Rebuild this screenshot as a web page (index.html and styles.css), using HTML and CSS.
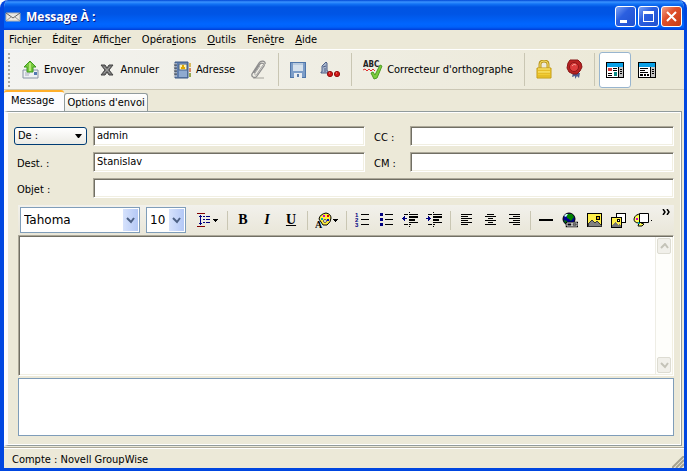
FILE: index.html
```html
<!DOCTYPE html>
<html lang="fr">
<head>
    <meta charset="UTF-8">
    <meta name="viewport" content="width=device-width, initial-scale=1.0">
    <title>Message À :</title>
    <link rel="stylesheet" href="styles.css">
</head>
<body>
<div class="window">

    <!-- Title bar -->
    <header class="titlebar">
        <svg width="16" height="16" viewBox="0 0 16 16"><path d="M1 4h14v8H1z" fill="#e8e8e4" stroke="#b5b5b0"/><path d="M1 4l7 5 7-5" fill="none" stroke="#666"/><path d="M1 12l5-4M15 12l-5-4" stroke="#999"/></svg>
        <h1>Message À :</h1>
        <button class="win-btn" aria-label="Réduire"><svg width="19" height="19"><path d="M4 13h7v3H4z" fill="#fff"/></svg></button>
        <button class="win-btn" aria-label="Agrandir"><svg width="19" height="19"><path d="M4 4h11v11H4zM5 7v7h9V7z" fill="#fff" fill-rule="evenodd"/></svg></button>
        <button class="win-btn close" aria-label="Fermer"><svg width="19" height="19"><path d="M5 5l9 9M14 5l-9 9" stroke="#fff" stroke-width="2"/></svg></button>
    </header>

    <!-- Menu -->
    <nav class="menubar">
        <button>Fich<u>i</u>er</button>
        <button>Édit<u>e</u>r</button>
        <button>Affic<u>h</u>er</button>
        <button>Opéra<u>t</u>ions</button>
        <button><u>O</u>utils</button>
        <button>Fenê<u>t</u>re</button>
        <button><u>A</u>ide</button>
    </nav>

    <!-- Main toolbar -->
    <div class="toolbar">
        <span class="grip"></span>
        <button class="tool">
            <svg width="18" height="20" viewBox="0 0 18 20"><path d="M1 10h15v8H1z" fill="#eef1f4" stroke="#8792a3"/><path d="M3 13h5M3 15h4" stroke="#aab"/><path d="M12 12h3v3h-3z" fill="#5379b0"/><path d="M8 1l6 6h-3v5H5V7H2z" fill="#76c83a" stroke="#3f9a20"/><path d="M8 3v8" stroke="#b2e878" stroke-width="2"/></svg>
            Envoyer
        </button>
        <button class="tool">
            <svg width="18" height="14" viewBox="0 0 18 14"><path d="M3 2h4l2 3 2-3h4l-4 5 4 5h-4l-2-3-2 3H3l4-5z" fill="#777" stroke="#444"/><path d="M6 4l6 6M12 4l-6 6" stroke="#999"/></svg>
            Annuler
        </button>
        <button class="tool">
            <svg width="19" height="20" viewBox="0 0 19 20"><path d="M2 2h13v16H2z" fill="#5f7eae" stroke="#3e5a86"/><path d="M6 3h8v14H6z" fill="#8faad0"/><path d="M6 4h8v6H6z" fill="#fff3b0" stroke="#46618d"/><path d="M9 5h2v2H9zM8 7h4v2H8z" fill="#e0a800"/><path d="M16 3h2v4h-2z" fill="#d9bb60"/><path d="M16 8h2v4h-2z" fill="#d88962"/><path d="M16 13h2v4h-2z" fill="#94a850"/><path d="M0 4h4M0 7h4M0 10h4M0 13h4M0 16h4" stroke="#ddd"/><path d="M1 5h3M1 8h3M1 11h3M1 14h3" stroke="#555"/></svg>
            Adresse
        </button>
        <button class="tool" aria-label="Joindre">
            <svg width="18" height="21" viewBox="0 0 18 21"><path d="M4 19h11" stroke="#c9c8c0" stroke-width="2"/><path d="M5 14l6-9c2-2 5 0 4 2l-7 10c-2 3-6 1-5-2L10 4c2-3 7-2 6 1" fill="none" stroke="#8e8e8e" stroke-width="1.3"/><path d="M11 7l-5 7c-1 2 1 3 2 1l6-9" fill="none" stroke="#a6a6a6"/></svg>
        </button>
        <span class="sep"></span>
        <button class="tool" aria-label="Enregistrer">
            <svg width="16" height="16" viewBox="0 0 16 16"><path d="M0 0h16v16H0z" fill="#4f77aa"/><path d="M1 1h14v14H1z" fill="#7c9dc8"/><path d="M3 1h10v8H3z" fill="#d5e1ec"/><path d="M3 1h10v2H3z" fill="#b8cbdf"/><path d="M4 11h8v5H4z" fill="#e9edf1"/><path d="M7 12h2v3H7z" fill="#5a7ca8"/></svg>
        </button>
        <button class="tool" aria-label="Propriétés">
            <svg width="20" height="20" viewBox="0 0 20 20"><path d="M2 12V6l4-4 1 1v8h1v2H1v-1z" fill="#a9b6cc" stroke="#4e6188"/><path d="M3 7l3-1M4 9h2M4 11h2" stroke="#4e6188"/><circle cx="10" cy="14" r="2.600" fill="#d41717" stroke="#8e1010"/><circle cx="17" cy="14" r="2.600" fill="#d41717" stroke="#8e1010"/><path d="M9 13h1M16 13h1" stroke="#ff9a8a"/></svg>
        </button>
        <span class="sep"></span>
        <button class="tool spell">
            <svg width="20" height="20" viewBox="0 0 20 20"><text x="0" y="7" class="abc">ABC</text><path d="M0 10l2-1 2 2 2-2 2 2 2-2 2 2" fill="none" stroke="#e03030"/><path d="M8 13l2-1 2 3 5-10 2 1-5 12-3 1z" fill="#7ccc3c" stroke="#4d9d24"/></svg>
            Correcteur d'orthographe
        </button>
        <span class="sep"></span>
        <button class="tool" aria-label="Chiffrer">
            <svg width="16" height="19" viewBox="0 0 16 19"><path d="M4 9V4q0-3 4-3t4 3v5" fill="none" stroke="#b9951e" stroke-width="3"/><path d="M4 9V4q0-3 4-3t4 3v5" fill="none" stroke="#f6df66"/><path d="M1 8h14v10H1z" fill="#f2cd35" stroke="#c39a13"/><path d="M2 10h12M2 13h12M2 16h12" stroke="#d9ae1c"/><path d="M2 9h12M2 12h12" stroke="#fdea80"/></svg>
        </button>
        <button class="tool" aria-label="Signer">
            <svg width="17" height="21" viewBox="0 0 17 21"><path d="M7 14h7l-1 5-2-2-2 3v-3l-3 1z" fill="#4c5d91"/><path d="M4 1h8l3 3 1 4-2 4-3 3H7l-4-2-2-4 1-5z" fill="#b82222" stroke="#861515"/><circle cx="8" cy="8" r="4.500" fill="#dc3c3c" stroke="#8b1818"/><path d="M6 7q2-3 4-1" fill="none" stroke="#f69a92"/></svg>
        </button>
        <span class="sep"></span>
        <button class="tool view pressed" aria-label="Vue HTML" aria-pressed="true">
            <svg width="18" height="16" viewBox="0 0 18 16" shape-rendering="crispEdges"><path d="M0 0h18v16H0z"/><path d="M1 1h16v4H1z" fill="#0aa0e6"/><path d="M1 5h11v10H1z" fill="#fff"/><path d="M13 5h4v10h-4z" fill="#c4c4c4"/><path d="M2 6h4v3H2z" fill="#d33c3c"/><path d="M8 10h3v4H8z" fill="#0b8c86"/><path d="M7 6h4v1H7zM7 8h4v1H7zM2 11h4v1H2zM2 13h4v1H2zM14 7h2v1h-2zM14 9h2v1h-2zM14 11h2v1h-2z"/></svg>
        </button>
        <button class="tool view" aria-label="Vue texte" aria-pressed="false">
            <svg width="18" height="16" viewBox="0 0 18 16" shape-rendering="crispEdges"><path d="M0 0h18v16H0z"/><path d="M1 1h16v4H1z" fill="#0aa0e6"/><path d="M1 5h11v10H1z" fill="#fff"/><path d="M13 5h4v10h-4z" fill="#c4c4c4"/><path d="M2 6h8v1H2zM2 8h5v1H2zM2 10h8v1H2zM2 12h3v2H2zM6 12h2v2H6zM9 12h2v2H9zM14 7h2v1h-2zM14 9h2v1h-2zM14 11h2v1h-2z"/></svg>
        </button>
    </div>

    <!-- Tabs -->
    <div class="tabs" role="tablist">
        <button class="tab active" role="tab" aria-selected="true">Message</button>
        <button class="tab" role="tab" aria-selected="false">Options d'envoi</button>
    </div>

    <main class="panel">
        <div class="fields">
            <button class="from-btn">De :
                <svg width="9" height="5"><path d="M1 0h7L5 4H4z"/></svg>
            </button>
            <input type="text" value="admin" aria-label="De">
            <label class="copy" for="cc">CC :</label>
            <input type="text" id="cc">

            <label for="dest">Dest. :</label>
            <input type="text" id="dest" value="Stanislav">
            <label class="copy" for="cm">CM :</label>
            <input type="text" id="cm">

            <label for="objet">Objet :</label>
            <input type="text" id="objet" class="wide">
        </div>

        <!-- Formatting toolbar -->
        <div class="format-bar">
            <span class="combo font">
                <select aria-label="Police"><option>Tahoma</option></select>
                <span class="combo-arrow"><svg width="9" height="7"><path d="M1 1l4 4 3-4" fill="none" stroke="#4d6185" stroke-width="2"/></svg></span>
            </span>
            <span class="combo size">
                <select aria-label="Taille"><option>10</option></select>
                <span class="combo-arrow"><svg width="9" height="7"><path d="M1 1l4 4 3-4" fill="none" stroke="#4d6185" stroke-width="2"/></svg></span>
            </span>
            <button class="fmt drop" aria-label="Style de paragraphe">
                <svg width="22" height="15" viewBox="0 0 22 15" shape-rendering="crispEdges"><path d="M0 0h8v1H0zM0 13h8v1H0z" fill="#800000"/><path d="M3 2h1v10H3zM2 3h3v1H2zM2 10h3v1H2zM6 3h2v1H6zM6 6h2v1H6zM6 9h2v1H6zM9 3h4v1H9zM9 6h4v1H9zM9 9h4v1H9z" fill="#000080"/><path d="M16 6h5v1h-5zM17 7h3v1h-3zM18 8h1v1h-1z"/></svg>
            </button>
            <span class="sep"></span>
            <button class="fmt letter"><b>B</b></button>
            <button class="fmt letter"><i>I</i></button>
            <button class="fmt letter"><u>U</u></button>
            <span class="sep"></span>
            <button class="fmt drop" aria-label="Couleur du texte">
                <svg width="24" height="17" viewBox="0 0 24 17"><path d="M4 7q1-5 7-6 5 1 5 5t-4 7H8z" fill="#ffef3a" stroke="#000"/><path d="M6 6h2v2H6z" fill="#0aa"/><path d="M8 3h2v2H8z" fill="#c0c"/><path d="M12 3h2v2h-2z" fill="#d00"/><path d="M12 7h2v2h-2z" fill="#00c"/><circle cx="10" cy="9" r="1.500" fill="#fff" stroke="#555"/><text x="0" y="16" class="color-a">A</text><path d="M18 7h5v1h-5zM19 8h3v1h-3zM20 9h1v1h-1z"/></svg>
            </button>
            <span class="sep"></span>
            <button class="fmt" aria-label="Liste numérotée">
                <svg width="15" height="16" viewBox="0 0 15 16" shape-rendering="crispEdges"><text x="0" y="5" class="num">1</text><text x="0" y="10" class="num">2</text><text x="0" y="15" class="num">3</text><path d="M6 2h8v1H6zM6 7h8v1H6zM6 12h8v1H6z"/></svg>
            </button>
            <button class="fmt" aria-label="Liste à puces">
                <svg width="15" height="16" viewBox="0 0 15 16" shape-rendering="crispEdges"><path d="M1 1h3v3H1zM1 6h3v3H1zM1 11h3v3H1z" fill="#000080"/><path d="M6 2h8v1H6zM6 7h8v1H6zM6 12h8v1H6z"/></svg>
            </button>
            <button class="fmt" aria-label="Diminuer le retrait">
                <svg width="16" height="16" viewBox="0 0 16 16" shape-rendering="crispEdges"><path d="M0 6h5v1H0zM1 5h2v3H1zM2 4h1v5H2z" fill="#000080"/><path d="M2 2h4v1H2zM7 0h1v1H7zM7 2h9v1H7zM7 4h9v2H7zM7 7h6v2H7zM7 10h9v1H7zM2 12h4v1H2zM7 12h2v1H7zM7 14h1v1H7z"/></svg>
            </button>
            <button class="fmt" aria-label="Augmenter le retrait">
                <svg width="16" height="16" viewBox="0 0 16 16" shape-rendering="crispEdges"><path d="M0 6h5v1H0zM2 5h2v3H2zM2 4h1v5H2z" fill="#000080"/><path d="M2 2h4v1H2zM7 0h1v1H7zM7 2h9v1H7zM7 4h9v2H7zM7 7h6v2H7zM7 10h9v1H7zM2 12h4v1H2zM7 12h2v1H7zM7 14h1v1H7z"/></svg>
            </button>
            <span class="sep"></span>
            <button class="fmt" aria-label="Aligner à gauche">
                <svg width="11" height="12" viewBox="0 0 11 12" shape-rendering="crispEdges"><path d="M0 0h11v1H0zM0 2h7v1H0zM0 4h11v1H0zM0 6h7v1H0zM0 8h11v1H0zM0 10h7v1H0z"/></svg>
            </button>
            <button class="fmt" aria-label="Centrer">
                <svg width="11" height="12" viewBox="0 0 11 12" shape-rendering="crispEdges"><path d="M2 0h7v1H2zM0 2h11v1H0zM3 4h5v1H3zM0 6h11v1H0zM3 8h5v1H3zM0 10h11v1H0z"/></svg>
            </button>
            <button class="fmt" aria-label="Aligner à droite">
                <svg width="11" height="12" viewBox="0 0 11 12" shape-rendering="crispEdges"><path d="M0 0h11v1H0zM4 2h7v1H4zM0 4h11v1H0zM4 6h7v1H4zM0 8h11v1H0zM4 10h7v1H4z"/></svg>
            </button>
            <span class="sep"></span>
            <button class="fmt" aria-label="Ligne horizontale">
                <svg width="14" height="2"><path d="M0 0h14v2H0z"/></svg>
            </button>
            <button class="fmt" aria-label="Lien">
                <svg width="16" height="16" viewBox="0 0 16 16"><circle cx="7" cy="7" r="6" fill="#000090" stroke="#000"/><path d="M5 2h5l2 3-3 4-2-2-2-1zM2 8l3 1 1 3-3-1z" fill="#008000"/><path d="M2 4l2-2h2L4 5z" fill="#cff"/><path d="M5 11h5v3H5zM10 11h5v3h-5z" fill="none" stroke="#000" stroke-width="2.500"/><path d="M5 11h5v3H5zM10 11h5v3h-5z" fill="none" stroke="#ddd"/></svg>
            </button>
            <button class="fmt" aria-label="Image">
                <svg width="15" height="14" viewBox="0 0 15 14" shape-rendering="crispEdges"><path d="M0 0h15v14H0z"/><path d="M1 1h13v12H1z" fill="#fff04a"/><path d="M9 3h4v4H9z"/><path d="M10 4h2v2h-2z" fill="#d8a800"/><path d="M1 13v-2l4-4 3 3 2-2 4 4v1z" fill="#808080" stroke="#333"/></svg>
            </button>
            <button class="fmt" aria-label="Image d'arrière-plan">
                <svg width="15" height="15" viewBox="0 0 15 15" shape-rendering="crispEdges"><path d="M5 0h10v10H5z"/><path d="M6 1h8v8H6z" fill="#fff"/><path d="M0 4h11v11H0z"/><path d="M1 5h9v9H1z" fill="#fff04a"/><path d="M6 6h3v3H6z"/><path d="M7 7h1v1H7z" fill="#fff"/><path d="M1 14v-2l3-3 3 3 1-1 2 2v1z" fill="#777"/></svg>
            </button>
            <button class="fmt" aria-label="Couleur d'arrière-plan">
                <svg width="19" height="15" viewBox="0 0 19 15"><path d="M1 6q1-5 7-5v9l3 1q-1 3-6 2l1-3q-5 0-5-4z" fill="#ff5" stroke="#000"/><path d="M3 5h2v2H3z" fill="#c0c"/><path d="M5 9h2v2H5z" fill="#0aa"/><path d="M6.500 .5h9v9h-9z" fill="#fff" stroke="#000"/><path d="M18 7h1v1h-1z"/></svg>
            </button>
            <button class="more" aria-label="Plus d'outils"><svg width="9" height="6" viewBox="0 0 9 6"><path d="M1 0l2 3-2 3M5 0l2 3-2 3" fill="none" stroke="#000" stroke-width="1.500"/></svg></button>
        </div>

        <!-- Message body -->
        <div class="editor">
            <textarea aria-label="Corps du message"></textarea>
            <div class="scrollbar">
                <button aria-label="Haut"><svg width="9" height="7"><path d="M1 5l4-4 3 4" fill="none" stroke="#c4c3b8" stroke-width="2"/></svg></button>
                <button aria-label="Bas"><svg width="9" height="7"><path d="M1 1l4 4 3-4" fill="none" stroke="#c4c3b8" stroke-width="2"/></svg></button>
            </div>
        </div>
        <div class="attachments"></div>
    </main>

    <footer class="statusbar">
        <span>Compte : Novell GroupWise</span>
        <svg width="12" height="12"><path d="M0 12L12 0M4 12l8-8M8 12l4-4" stroke="#a5a290" stroke-width="2"/></svg>
    </footer>
</div>
</body>
</html>
```
FILE: styles.css
```css
* {
    margin: 0;
    padding: 0;
    box-sizing: border-box;
}

body {
    font-family: "DejaVu Sans Condensed", "DejaVu Sans", Tahoma, sans-serif;
    font-size: 11px;
    line-height: 14px;
    color: #000;
    background: #fff;
}

button, input, select, textarea {
    font: inherit;
    color: inherit;
}

button {
    background: none;
    border: none;
    white-space: nowrap;
}

svg {
    display: block;
    flex-shrink: 0;
}

.window {
    display: flex;
    flex-direction: column;
    min-height: 100vh;
    background: #ece9d8;
    border: solid #0046e0;
    border-width: 0 3px 3px 4px;
    border-radius: 8px 8px 0 0;
    overflow: hidden;
}

/* Title bar */
.titlebar {
    display: flex;
    align-items: center;
    gap: 2px;
    height: 30px;
    margin: 0 -3px 0 -4px;
    padding: 3px 5px 0 5px;
    background: linear-gradient(#0046d5 0, #3a93ff 2px, #1273f5 4px, #0054e3 7px, #0055e5 14px, #0066ff 24px, #0061fa 27px, #003dd7 30px);
}

.titlebar h1 {
    flex: 1;
    margin-left: 3px;
    font-family: "Open Sans", "Trebuchet MS", sans-serif;
    font-size: 12px;
    font-weight: bold;
    color: #fff;
    text-shadow: 1px 1px #0a1883;
}

.win-btn {
    width: 21px;
    height: 21px;
    border: 1px solid #fff;
    border-radius: 3px;
    background: linear-gradient(135deg, #7ba2f5, #2b5fe0 40%, #1f50d0);
}

.win-btn.close {
    background: linear-gradient(135deg, #f0a088, #e0502c 40%, #c63c14);
}

/* Menu */
.menubar {
    display: flex;
    height: 19px;
}

.menubar button {
    padding: 0 6px 0 5px;
}

/* Main toolbar */
.toolbar {
    display: flex;
    align-items: center;
    height: 41px;
    padding-left: 4px;
    border-top: 1px solid #fff;
    border-bottom: 1px solid #cbc7b5;
    background: linear-gradient(90deg, #f3f3f0, #ece9d8 90%);
}

.grip {
    width: 2px;
    height: 34px;
    margin-right: 5px;
    background: repeating-linear-gradient(#aaa89c 0 2px, transparent 2px 4px);
}

.tool {
    display: flex;
    align-items: center;
    justify-content: center;
    gap: 4px;
    height: 36px;
    padding: 0 7px;
}

.tool.view {
    width: 32px;
}

.sep {
    width: 1px;
    height: 33px;
    margin: 0 4px;
    background: #c9c6b3;
}

.tool.pressed {
    border: 1px solid #98b5cf;
    border-radius: 3px;
    background: #fff;
}

.abc {
    font: bold 8px "DejaVu Sans Condensed", sans-serif;
    fill: #222;
}

/* Tabs */
.tabs {
    display: flex;
    align-items: flex-end;
    height: 21px;
}

.tab {
    height: 18px;
    padding: 0 2px;
    border: 1px solid #919b9c;
    border-bottom: none;
    border-radius: 3px 3px 0 0;
    background: linear-gradient(#fff, #f0f0ea);
}

.tab.active {
    height: 21px;
    padding: 0 10px 2px 7px;
    border: none;
    border-top: 2px solid #ffb02c;
    background: #fcfcfe;
}

/* Panel */
.panel {
    flex: 1;
    display: flex;
    flex-direction: column;
    margin-right: 2px;
    padding: 14px 7px 9px 10px;
    border: 1px solid #919b9c;
    border-left: 4px solid #fcfcfe;
    box-shadow: inset 0 1px #fff, inset -1px -1px #fff;
}

.fields {
    display: grid;
    grid-template-columns: 73px 272px 33px 1fr;
    grid-auto-rows: 20px;
    align-items: center;
    column-gap: 6px;
    row-gap: 6px;
    margin-left: -4px;
}

.fields label {
    padding: 4px 0 0 3px;
}

.fields input {
    width: 100%;
    height: 20px;
    padding: 0 3px 2px;
    border: 1px solid;
    border-color: #aca899 #fff #fff #aca899;
    box-shadow: inset 1px 1px #716f64, inset -1px -1px #f1efe2;
    background: #fff;
}

.fields .wide {
    grid-column: 2 / -1;
}

.from-btn {
    display: flex;
    align-items: center;
    justify-content: space-between;
    height: 18px;
    padding: 0 3px;
    border: 1px solid #003c74;
    border-radius: 3px;
    background: linear-gradient(#fff, #ecebe5);
}

/* Formatting toolbar */
.format-bar {
    display: flex;
    align-items: center;
    height: 30px;
    margin-top: 7px;
    padding-left: 2px;
    background: linear-gradient(#f2f1ec, #e9e6d8);
}

.format-bar .sep {
    height: 19px;
    margin: 0 3px 0 4px;
}

.combo {
    position: relative;
    height: 26px;
    margin-right: 6px;
    border: 1px solid #7f9db9;
    background: #fff;
}

.combo.font {
    width: 120px;
}

.combo.size {
    width: 40px;
}

.combo select {
    appearance: none;
    width: 100%;
    height: 24px;
    padding-left: 3px;
    border: none;
    background: none;
    font-family: "DejaVu Sans", Verdana, sans-serif;
    font-size: 12px;
}

.combo-arrow {
    position: absolute;
    top: 1px;
    right: 1px;
    display: flex;
    align-items: center;
    justify-content: center;
    width: 15px;
    height: 22px;
    background: linear-gradient(90deg, #d6e2fc, #b4c8f6);
    pointer-events: none;
}

.fmt {
    display: flex;
    align-items: center;
    justify-content: center;
    width: 24px;
    height: 24px;
}

.fmt.drop {
    width: 31px;
}

.letter {
    font-family: "Liberation Serif", serif;
    font-size: 14px;
    font-weight: bold;
}

.num {
    font: bold 6px "Liberation Sans", sans-serif;
    fill: #000080;
}

.color-a {
    font: bold 10px "Liberation Serif", serif;
}

.more {
    align-self: flex-start;
    margin-left: auto;
    padding: 4px 3px 0 0;
}

/* Message body */
.editor {
    flex: 1;
    display: flex;
    min-height: 100px;
    padding: 1px;
    border: 1px solid;
    border-color: #aca899 #fff #fff #aca899;
    box-shadow: inset 1px 1px #716f64, inset -1px -1px #f1efe2;
    background: #fff;
}

.editor textarea {
    flex: 1;
    padding: 2px;
    border: none;
    outline: none;
    resize: none;
}

.scrollbar {
    display: flex;
    flex-direction: column;
    justify-content: space-between;
    width: 17px;
    padding: 1px;
    border-left: 1px solid #eeede5;
    background: #fefefb;
}

.scrollbar button {
    display: flex;
    align-items: center;
    justify-content: center;
    height: 16px;
    border: 1px solid #dddcd2;
    border-radius: 2px;
    background: #f1f0ea;
}

.attachments {
    height: 58px;
    margin-top: 2px;
    border: 1px solid #7f9db9;
    background: #fff;
}

/* Status bar */
.statusbar {
    display: flex;
    justify-content: space-between;
    align-items: flex-end;
    height: 21px;
    margin-top: 1px;
    padding-left: 8px;
    border-top: 1px solid #aca899;
    box-shadow: inset 0 1px #fff;
}

.statusbar span {
    align-self: center;
    padding-top: 4px;
}
```
